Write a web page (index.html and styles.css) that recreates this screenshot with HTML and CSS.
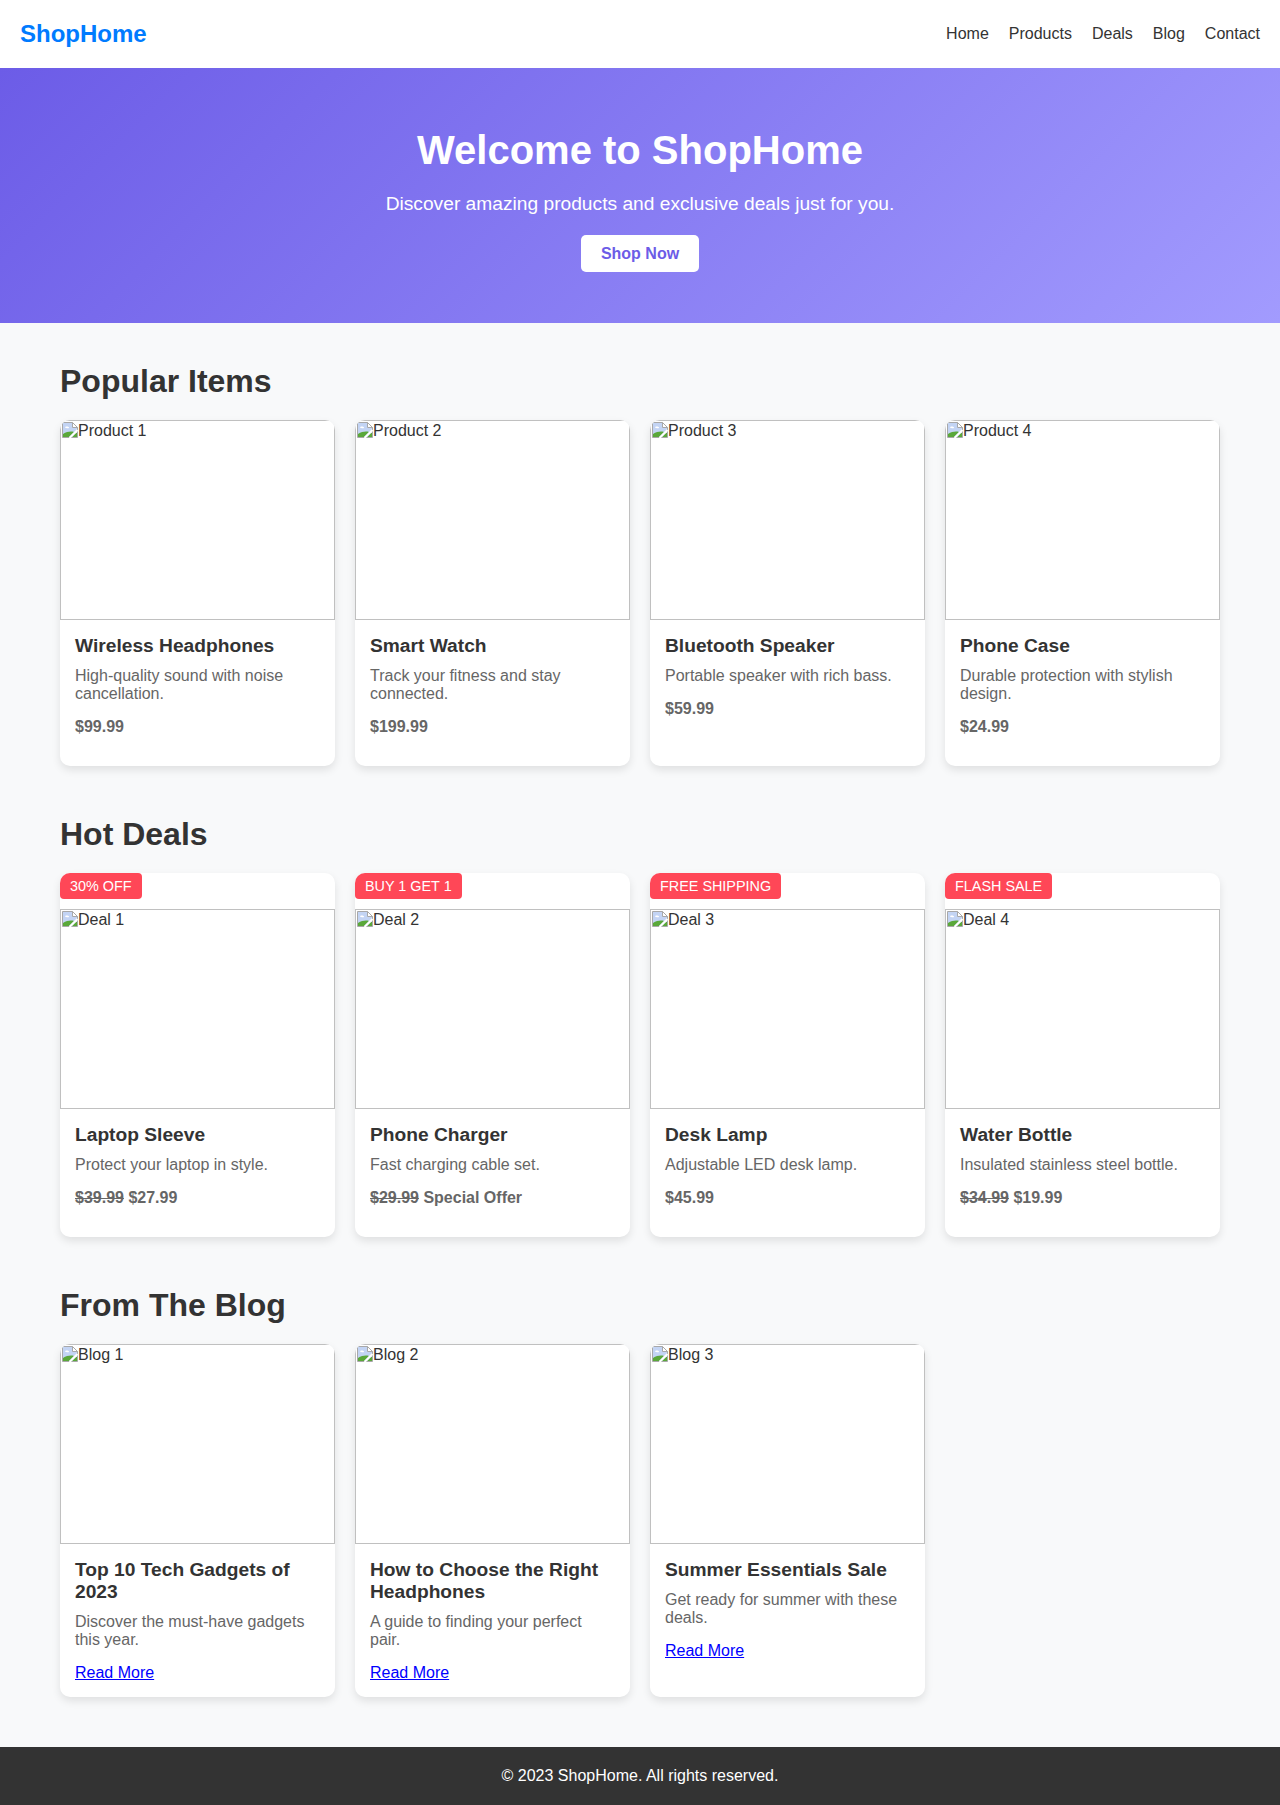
FILE: index.html
```html
<!DOCTYPE html>
<html lang="en">
<head>
    <meta charset="UTF-8">
    <meta name="viewport" content="width=device-width, initial-scale=1.0">
    <title>ShopHome</title>
    <link rel="stylesheet" href="styles.css">
</head>
<body>
    <svg class="defs" width="0" height="0">
        <symbol id="brokenImg" viewBox="0 0 16 16">
            <path d="M0.5 0.5H10.5L15.5 5.5V15.5H0.5Z" fill="#c3d4f4" stroke="#a8a8a8"/>
            <path d="M10.5 0.5V5.5H15.5Z" fill="#fff" stroke="#a8a8a8"/>
            <path d="M3 5.5C3 4.5 6 4 7 5.5C8 6.5 4 6.5 3 5.5Z" fill="#fff"/>
            <path d="M1 15V12C5 9.5 9 9 12 10L7 15Z" fill="#5aa83a"/>
            <path d="M14 11L10 15H15V11Z" fill="#5aa83a"/>
            <path d="M15.5 8L7.5 16" stroke="#fff" stroke-width="2"/>
        </symbol>
    </svg>

    <header class="header">
        <div class="logo">ShopHome</div>
        <nav class="nav">
            <a href="#">Home</a>
            <a href="#">Products</a>
            <a href="#">Deals</a>
            <a href="#">Blog</a>
            <a href="#">Contact</a>
        </nav>
    </header>

    <section class="hero">
        <h1>Welcome to ShopHome</h1>
        <p>Discover amazing products and exclusive deals just for you.</p>
        <a class="hero-btn" href="#">Shop Now</a>
    </section>

    <main class="content">
        <section class="section">
            <h2>Popular Items</h2>
            <div class="card-grid">
                <div class="card">
                    <div class="card-img"><svg><use href="#brokenImg"/></svg>Product 1</div>
                    <div class="card-body">
                        <h3>Wireless Headphones</h3>
                        <p>High-quality sound with noise cancellation.</p>
                        <p class="price">$99.99</p>
                    </div>
                </div>
                <div class="card">
                    <div class="card-img"><svg><use href="#brokenImg"/></svg>Product 2</div>
                    <div class="card-body">
                        <h3>Smart Watch</h3>
                        <p>Track your fitness and stay connected.</p>
                        <p class="price">$199.99</p>
                    </div>
                </div>
                <div class="card">
                    <div class="card-img"><svg><use href="#brokenImg"/></svg>Product 3</div>
                    <div class="card-body">
                        <h3>Bluetooth Speaker</h3>
                        <p>Portable speaker with rich bass.</p>
                        <p class="price">$59.99</p>
                    </div>
                </div>
                <div class="card">
                    <div class="card-img"><svg><use href="#brokenImg"/></svg>Product 4</div>
                    <div class="card-body">
                        <h3>Phone Case</h3>
                        <p>Durable protection with stylish design.</p>
                        <p class="price">$24.99</p>
                    </div>
                </div>
            </div>
        </section>

        <section class="section">
            <h2>Hot Deals</h2>
            <div class="card-grid">
                <div class="card">
                    <span class="badge">30% OFF</span>
                    <div class="card-img"><svg><use href="#brokenImg"/></svg>Deal 1</div>
                    <div class="card-body">
                        <h3>Laptop Sleeve</h3>
                        <p>Protect your laptop in style.</p>
                        <p class="price"><s>$39.99</s> $27.99</p>
                    </div>
                </div>
                <div class="card">
                    <span class="badge">BUY 1 GET 1</span>
                    <div class="card-img"><svg><use href="#brokenImg"/></svg>Deal 2</div>
                    <div class="card-body">
                        <h3>Phone Charger</h3>
                        <p>Fast charging cable set.</p>
                        <p class="price"><s>$29.99</s> Special Offer</p>
                    </div>
                </div>
                <div class="card">
                    <span class="badge">FREE SHIPPING</span>
                    <div class="card-img"><svg><use href="#brokenImg"/></svg>Deal 3</div>
                    <div class="card-body">
                        <h3>Desk Lamp</h3>
                        <p>Adjustable LED desk lamp.</p>
                        <p class="price">$45.99</p>
                    </div>
                </div>
                <div class="card">
                    <span class="badge">FLASH SALE</span>
                    <div class="card-img"><svg><use href="#brokenImg"/></svg>Deal 4</div>
                    <div class="card-body">
                        <h3>Water Bottle</h3>
                        <p>Insulated stainless steel bottle.</p>
                        <p class="price"><s>$34.99</s> $19.99</p>
                    </div>
                </div>
            </div>
        </section>

        <section class="section">
            <h2>From The Blog</h2>
            <div class="card-grid">
                <div class="card">
                    <div class="card-img"><svg><use href="#brokenImg"/></svg>Blog 1</div>
                    <div class="card-body">
                        <h3>Top 10 Tech Gadgets of 2023</h3>
                        <p>Discover the must-have gadgets this year.</p>
                        <a href="#">Read More</a>
                    </div>
                </div>
                <div class="card">
                    <div class="card-img"><svg><use href="#brokenImg"/></svg>Blog 2</div>
                    <div class="card-body">
                        <h3>How to Choose the Right Headphones</h3>
                        <p>A guide to finding your perfect pair.</p>
                        <a href="#">Read More</a>
                    </div>
                </div>
                <div class="card">
                    <div class="card-img"><svg><use href="#brokenImg"/></svg>Blog 3</div>
                    <div class="card-body">
                        <h3>Summer Essentials Sale</h3>
                        <p>Get ready for summer with these deals.</p>
                        <a href="#">Read More</a>
                    </div>
                </div>
            </div>
        </section>
    </main>

    <footer class="footer">&copy; 2023 ShopHome. All rights reserved.</footer>
</body>
</html>
```

FILE: styles.css
```css
* {
    margin: 0;
    padding: 0;
    box-sizing: border-box;
}

body {
    font-family: "Liberation Sans", Arial, sans-serif;
    background: #f8f9fa;
    color: #333;
}

.defs {
    position: absolute;
}

/* header */
.header {
    display: flex;
    justify-content: space-between;
    align-items: center;
    height: 68px;
    padding: 0 20px;
    background: #fff;
}

.logo {
    font-size: 24px;
    font-weight: bold;
    color: #007bff;
}

.nav {
    display: flex;
    gap: 20px;
}

.nav a {
    color: #333;
    text-decoration: none;
}

/* hero */
.hero {
    height: 255px;
    padding-top: 60px;
    text-align: center;
    color: #fff;
    background: linear-gradient(135deg, #6c5ce7, #a29bfe);
}

.hero h1 {
    font-size: 40px;
    margin-bottom: 20px;
}

.hero p {
    font-size: 19.2px;
    margin-bottom: 20px;
}

.hero-btn {
    display: inline-block;
    padding: 10px 20px;
    border-radius: 5px;
    background: #fff;
    color: #6c5ce7;
    font-weight: bold;
    line-height: 17px;
    text-decoration: none;
}

/* sections */
.content {
    padding: 40px 60px 0;
}

.section {
    margin-bottom: 50px;
}

.section h2 {
    font-size: 32px;
    margin-bottom: 20px;
}

.card-grid {
    display: grid;
    grid-template-columns: repeat(4, 1fr);
    gap: 20px;
}

.card {
    background: #fff;
    border-radius: 10px;
    overflow: hidden;
    box-shadow: 0 4px 8px rgba(0, 0, 0, 0.1);
}

.card-img {
    height: 200px;
    padding: 1px;
    border: 1px solid silver;
    line-height: 18px;
}

.card-img svg {
    width: 16px;
    height: 16px;
    vertical-align: top;
}

.badge {
    display: inline-block;
    margin-bottom: 10px;
    padding: 5px 10px;
    border-radius: 4px;
    background: #ff4757;
    color: #fff;
    font-size: 14.4px;
    line-height: 16px;
    vertical-align: top;
}

.card-body {
    padding: 15px;
}

.card-body h3 {
    font-size: 19.2px;
    margin-bottom: 10px;
}

.card-body p {
    color: #666;
    margin-bottom: 15px;
}

.card-body .price {
    font-weight: bold;
}

.card-body a {
    color: #00f;
}

/* footer */
.footer {
    padding: 20px;
    text-align: center;
    background: #333;
    color: #fff;
}
```
